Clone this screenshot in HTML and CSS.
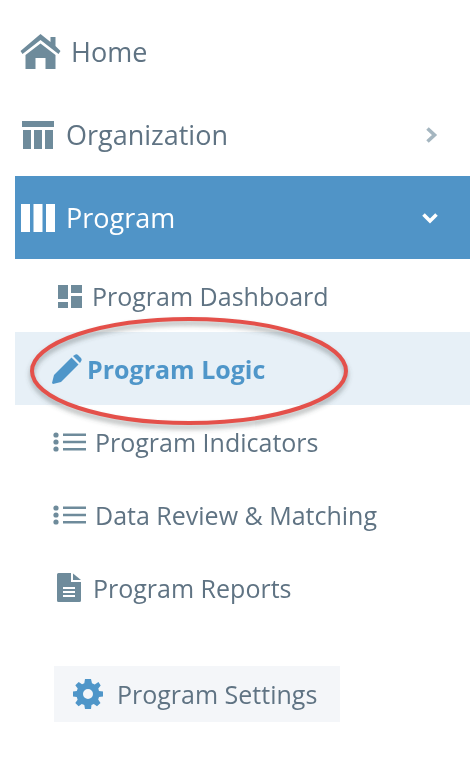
FILE: index.html
```html
<!DOCTYPE html>
<html lang="en">
<head>
<meta charset="utf-8">
<title>Program navigation</title>
<link rel="stylesheet" href="styles.css">
</head>
<body>
<nav class="sidebar">
  <a class="top-item">
    <svg class="top-icon" viewBox="0 0 40 36"><path d="M20 0 L30 8 V3 H35 V12 L40 17 L38 20 L20 6 L2 20 L0 17 Z"/><path d="M20 9.5 L35 21 V35 H25 V24 H15 V35 H5 V21 Z"/></svg>
    <span>Home</span>
  </a>
  <a class="top-item">
    <svg class="top-icon" viewBox="0 0 34 30"><path d="M1 1 H33 V7 H1 Z M2 10 H10 V29 H2 Z M13 10 H21 V29 H13 Z M24 10 H32 V29 H24 Z"/></svg>
    <span class="grow">Organization</span>
    <svg class="chevron" viewBox="0 0 12 16"><path d="M2.5 1.5 L9.5 8 L2.5 14.5"/></svg>
  </a>
  <a class="top-item active">
    <svg class="top-icon" viewBox="0 0 36 30"><path d="M1 1 H10 V29 H1 Z M13.5 1 H22.5 V29 H13.5 Z M26 1 H35 V29 H26 Z"/></svg>
    <span class="grow">Program</span>
    <svg class="chevron" viewBox="0 0 16 12"><path d="M1.5 2.5 L8 9 L14.5 2.5"/></svg>
  </a>
  <a class="sub-item">
    <svg class="sub-icon" viewBox="0 0 26 24"><path d="M1 1 H11 V15 H1 Z M14 1 H25 V9 H14 Z M1 18 H11 V24 H1 Z M14 12 H25 V24 H14 Z"/></svg>
    <span>Program Dashboard</span>
  </a>
  <a class="sub-item current">
    <svg class="pencil" viewBox="0 0 30 30"><path d="M21 2 L23.5 0.5 Q25 0 26 1 L29 4 Q30 5 29.5 6.5 L28 9 Z M19.5 3.5 L26.5 10.5 L9 28 L1 30 L0 29 L2 21 Z" /></svg>
    <span>Program Logic</span>
  </a>
  <a class="sub-item">
    <svg class="list-icon" viewBox="0 0 33 20"><circle cx="3" cy="3" r="2.6"/><circle cx="3" cy="10" r="2.6"/><circle cx="3" cy="17" r="2.6"/><path d="M10 1.5 H33 V4 H10 Z M10 8.8 H33 V11.3 H10 Z M10 16 H33 V18.5 H10 Z"/></svg>
    <span>Program Indicators</span>
  </a>
  <a class="sub-item">
    <svg class="list-icon" viewBox="0 0 33 20"><circle cx="3" cy="3" r="2.6"/><circle cx="3" cy="10" r="2.6"/><circle cx="3" cy="17" r="2.6"/><path d="M10 1.5 H33 V4 H10 Z M10 8.8 H33 V11.3 H10 Z M10 16 H33 V18.5 H10 Z"/></svg>
    <span>Data Review &amp; Matching</span>
  </a>
  <a class="sub-item">
    <svg class="file-icon" viewBox="0 0 24 29"><path fill-rule="evenodd" d="M1.5 0 H14 V9 H24 V27.5 Q24 29 22.5 29 H1.5 Q0 29 0 27.5 V1.5 Q0 0 1.5 0 Z M6 14 V16 H18 V14 Z M6 18 V20 H18 V18 Z M6 22 V24 H18 V22 Z"/><path d="M16 0.5 L24 7 H16 Z"/></svg>
    <span>Program Reports</span>
  </a>
  <a class="settings">
    <svg class="gear" viewBox="0 0 30 30"><path fill-rule="evenodd" d="M12 0 H18 L19 4.3 L21.7 5.4 L25.5 3 L27.7 6.5 L25.3 9.6 L26 12 L30 12.5 V17.5 L26 18 L25.2 20.6 L27.5 24 L24 27.3 L20.8 25 L18.5 26 L18 30 H12 L11.3 26 L8.8 25 L5.6 27.3 L2.3 24 L4.6 20.8 L3.8 18 L0 17.5 V12.5 L3.8 12 L4.7 9.5 L2.3 6.3 L5.7 3 L9 5.3 L11.3 4.3 Z M15 10 A5 5 0 1 0 15 20 A5 5 0 1 0 15 10 Z"/></svg>
    <span>Program Settings</span>
  </a>
</nav>
<svg class="annotation" viewBox="0 0 330 120">
  <defs><filter id="soft" x="-10%" y="-20%" width="120%" height="150%"><feGaussianBlur stdDeviation="2.5"/></filter></defs>
  <ellipse class="ring-shadow" cx="165" cy="60" rx="157" ry="52" filter="url(#soft)"/>
  <ellipse class="ring" cx="165" cy="56" rx="157" ry="52"/>
</svg>
</body>
</html>
```
FILE: styles.css
```css
* { box-sizing: border-box; }
html, body { margin: 0; padding: 0; background: #fff; }
body {
  width: 470px;
  height: 767px;
  overflow: hidden;
  position: relative;
  font-family: "Open Sans", "Liberation Sans", sans-serif;
  color: #5f7383;
}
.sidebar {
  display: flex;
  flex-direction: column;
  padding: 10px 0 0 15px;
  filter: blur(0.5px);
}
svg { fill: #6e8b9b; flex: none; display: block; }
.top-item {
  display: flex;
  align-items: center;
  height: 83px;
  font-size: 27px;
  padding: 0 32px 0 5px;
  gap: 10px;
}
.top-item:first-child { height: 83px; }
.top-item:nth-child(2) { height: 83px; }
.top-icon { width: 41px; height: 36px; }
.top-item:nth-child(2) .top-icon { width: 36px; height: 30px; }
.top-item:nth-child(3) .top-icon { width: 36px; height: 30px; }
.grow { flex: 1; }
.chevron { width: 14px; height: 16px; fill: none; stroke: #a5b6c0; stroke-width: 3.6; }
.active { background: #5094c7; color: #fff; }
.active .top-icon { fill: #fff; }
.active .chevron { stroke: #fff; width: 16px; height: 12px; }
.sub-item {
  display: flex;
  align-items: center;
  height: 73px;
  font-size: 25px;
  padding-left: 38px;
  gap: 9px;
}
.sub-icon { width: 26px; height: 24px; margin-left: 4px; }
.list-icon { width: 33px; height: 20px; }
.file-icon { width: 24px; height: 29px; margin-left: 4px; margin-right: 3px; }
.current { background: #e7f0f7; color: #4f96c9; font-weight: 700; padding-left: 36px; gap: 5px; }
.pencil { width: 30px; height: 30px; fill: #4f96c9; margin-left: 1px; }
.settings {
  display: flex;
  align-items: center;
  width: 286px;
  height: 56px;
  margin: 42px 0 0 39px;
  padding-left: 19px;
  gap: 14px;
  font-size: 25px;
  background: #f4f6f9;
}
.gear { width: 30px; height: 30px; fill: #4f96c9; }
.annotation {
  position: absolute;
  left: 24px;
  top: 315px;
  width: 330px;
  height: 120px;
  fill: none;
}
.ring { stroke: #e4504a; stroke-width: 4; fill: none; }
.ring-shadow { stroke: rgba(70, 80, 80, 0.45); stroke-width: 4; fill: none; }
```
